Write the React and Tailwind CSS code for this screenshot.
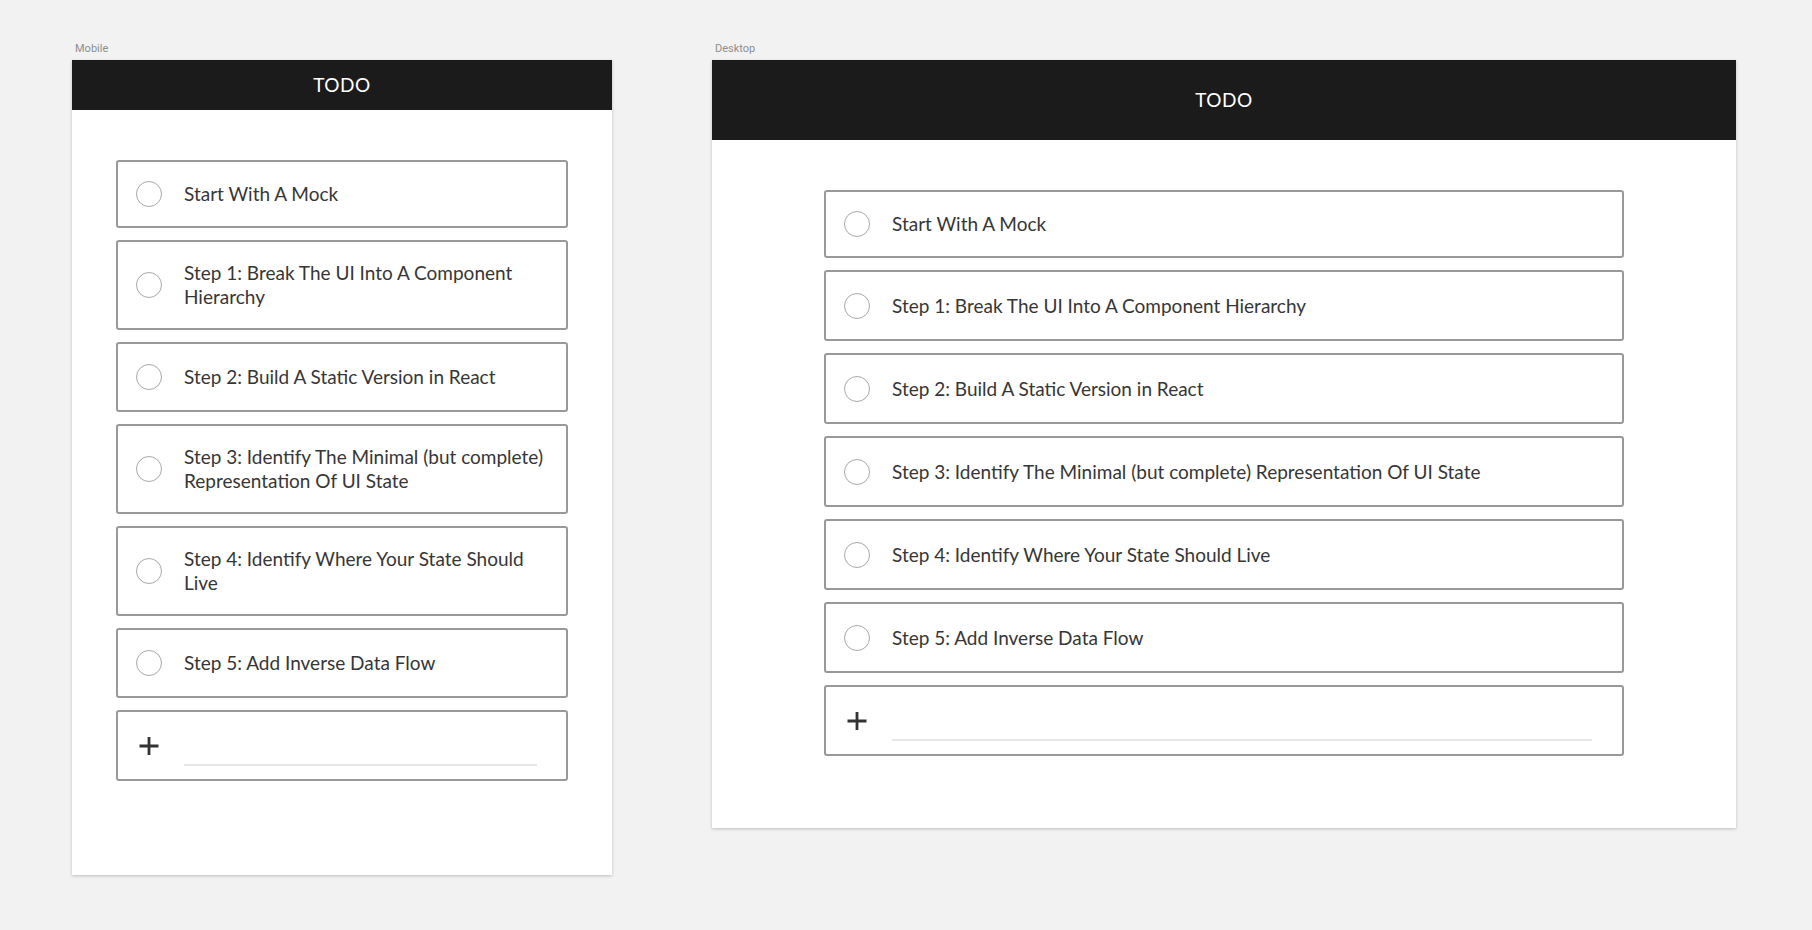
import React from "react";

const items = [
  "Start With A Mock",
  "Step 1: Break The UI Into A Component Hierarchy",
  "Step 2: Build A Static Version in React",
  "Step 3: Identify The Minimal (but complete) Representation Of UI State",
  "Step 4: Identify Where Your State Should Live",
  "Step 5: Add Inverse Data Flow",
];

const font = { fontFamily: "Lato, 'Noto Sans', sans-serif" };

function Circle() {
  return <span className="block w-[26px] h-[26px] shrink-0 rounded-full border border-[#a8a8a8]" />;
}

function Plus() {
  return (
    <svg width="26" height="20" viewBox="0 0 26 20" className="shrink-0">
      <path d="M13 1V19M3.5 10H22.5" stroke="#333" strokeWidth="2.8" fill="none" />
    </svg>
  );
}

function Row({ text, first, desktop }) {
  return (
    <div
      className={
        "flex items-center gap-[22px] border-2 border-[#999999] rounded-[3px] bg-white pl-[18px] pr-[14px] py-[19px] " +
        (first ? (desktop ? "min-h-[68px]" : "min-h-[67px]") : desktop ? "min-h-[71px]" : "min-h-[70px]")
      }
    >
      <Circle />
      <span className="text-[19px] leading-[24px] text-[#363636]">{text}</span>
    </div>
  );
}

function AddRow({ desktop }) {
  return (
    <div
      className={
        "flex items-center gap-[22px] border-2 border-[#999999] rounded-[3px] bg-white pl-[18px] h-[71px] " +
        (desktop ? "pr-[30px]" : "pr-[29px]")
      }
    >
      <Plus />
      <input
        aria-label="new todo"
        className="flex-1 self-end mb-[13px] h-[30px] border-b-2 border-[#e6e6e6] bg-transparent outline-none"
      />
    </div>
  );
}

function Frame({ label, width, height, headerH, listW, desktop }) {
  return (
    <div className="flex flex-col gap-[4px]">
      <div className="pl-[3px] h-[14px] text-[11px] leading-[14px] text-[#8e8e8e]" style={{ fontFamily: "Roboto, sans-serif" }}>
        {label}
      </div>
      <div
        className={"flex flex-col bg-white shadow-[0_1px_3px_rgba(0,0,0,0.22)] " + width + " " + height}
      >
        <div className={"flex items-center justify-center bg-[#1b1b1b] text-white text-[19px] tracking-[0.5px] " + headerH}>
          TODO
        </div>
        <div className={"flex flex-col gap-[12px] self-center pt-[50px] " + listW}>
          {items.map((t, i) => (
            <Row key={i} text={t} first={i === 0} desktop={desktop} />
          ))}
          <AddRow desktop={desktop} />
        </div>
      </div>
    </div>
  );
}

export default function App() {
  return (
    <div className="w-[1812px] h-[930px] bg-[#f2f2f2] flex items-start gap-[100px] pl-[72px] pt-[42px]" style={font}>
      <Frame label="Mobile" width="w-[540px]" height="h-[815px]" headerH="h-[50px]" listW="w-[452px]" />
      <Frame label="Desktop" width="w-[1024px]" height="h-[768px]" headerH="h-[80px]" listW="w-[800px]" desktop />
    </div>
  );
}
